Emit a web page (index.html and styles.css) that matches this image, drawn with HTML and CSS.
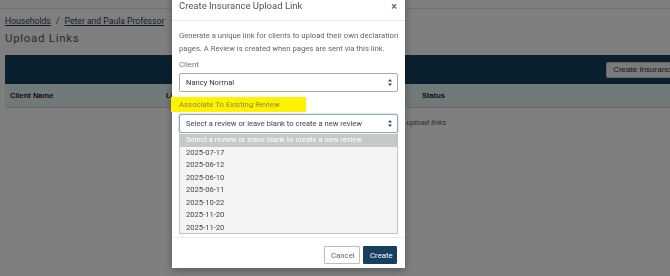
FILE: index.html
```html
<!DOCTYPE html>
<html lang="en">
<head>
    <meta charset="UTF-8">
    <meta name="viewport" content="width=device-width, initial-scale=1.0">
    <title>Upload Links</title>
    <link rel="stylesheet" href="styles.css">
</head>
<body>
    <div class="page">
        <div class="topbar"></div>
        <div class="breadcrumb">
            <a href="#">Households</a>
            <span class="sep">/</span>
            <a href="#">Peter and Paula Professor</a>
        </div>
        <h1 class="page-title">Upload Links</h1>

        <div class="toolbar">
            <button class="btn-light">Create Insurance Upload Link</button>
        </div>

        <div class="table">
            <div class="table-head">
                <div class="cell">Client Name</div>
                <div class="cell">Link</div>
                <div class="cell">Status</div>
            </div>
            <div class="table-empty">No insurance upload links</div>
        </div>
    </div>

    <div class="backdrop"></div>

    <div class="modal">
        <div class="modal-header">
            <span class="modal-title">Create Insurance Upload Link</span>
            <span class="close">&times;</span>
        </div>
        <div class="modal-body">
            <p class="intro">Generate a unique link for clients to upload their own declaration pages. A Review is created when pages are sent via this link.</p>

            <label class="field-label">Client</label>
            <div class="select">
                <span>Nancy Normal</span>
                <svg class="arrows" width="4" height="7" viewBox="0 0 4 7"><path d="M2 0 L4 2.6 H0 Z M2 7 L0 4.4 H4 Z" fill="#444"/></svg>
            </div>

            <div class="highlight">Associate To Existing Review</div>
            <div class="select focused">
                <span>Select a review or leave blank to create a new review</span>
                <svg class="arrows" width="4" height="7" viewBox="0 0 4 7"><path d="M2 0 L4 2.6 H0 Z M2 7 L0 4.4 H4 Z" fill="#444"/></svg>
            </div>
            <div class="options">
                <div class="option active">Select a review or leave blank to create a new review</div>
                <div class="option">2025-07-17</div>
                <div class="option">2025-06-12</div>
                <div class="option">2025-06-10</div>
                <div class="option">2025-06-11</div>
                <div class="option">2025-10-22</div>
                <div class="option">2025-11-20</div>
                <div class="option">2025-11-20</div>
            </div>
        </div>
        <div class="modal-footer">
            <button class="btn-cancel">Cancel</button>
            <button class="btn-primary">Create</button>
        </div>
    </div>
</body>
</html>
```

FILE: styles.css
```css
body {
    margin: 0;
    width: 670px;
    height: 276px;
    overflow: hidden;
    background: #fff;
    font-family: Roboto, "Liberation Sans", sans-serif;
    color: #333;
}
.page {
    width: 727px;
    padding: 0 5px;
}
.topbar {
    height: 8px;
    border-bottom: 1px solid #e4e4e4;
    margin: 0 -5px;
}
.breadcrumb {
    margin-top: 6px;
    font-size: 8.6px;
    line-height: 12px;
    color: #555;
}
.breadcrumb a {
    color: #1d3b52;
    text-decoration: underline;
}
.breadcrumb .sep {
    margin: 0 3px;
}
.page-title {
    margin: 4px 0 0;
    font-size: 11.5px;
    font-weight: 400;
    letter-spacing: 0.7px;
    line-height: 15px;
    color: #555;
}
.toolbar {
    margin-top: 9px;
    height: 29px;
    background: #17405e;
    display: flex;
    align-items: center;
    justify-content: flex-end;
    padding-right: 6px;
}
.btn-light {
    font-family: "Liberation Sans", Arial, sans-serif;
    font-size: 8px;
    height: 16px;
    padding: 0 6px;
    background: #f4f4f4;
    border: 1px solid #ccc;
    border-radius: 2px;
    color: #333;
}
.table {
    font-family: "Liberation Sans", Arial, sans-serif;
    font-size: 7.5px;
}
.table-head {
    display: grid;
    grid-template-columns: 156px 256px 1fr;
    height: 23px;
    align-items: center;
    background: #e2f4f2;
    border-bottom: 1px solid #c9d6d5;
    font-weight: bold;
    color: #222;
}
.table-head .cell {
    padding-left: 5px;
}
.table-empty {
    padding: 10px 0 0 355px;
    font-style: italic;
    color: #555;
}
.backdrop {
    position: fixed;
    inset: 0;
    background: rgba(0, 0, 0, 0.5);
}
.modal {
    position: absolute;
    left: 172px;
    top: -8px;
    width: 233px;
    background: #fff;
    box-shadow: 0 2px 8px rgba(0, 0, 0, 0.3);
}
.modal-header {
    height: 28px;
    display: flex;
    align-items: center;
    justify-content: space-between;
    padding: 0 8px 0 7px;
    border-bottom: 1px solid #e6e6e6;
}
.modal-title {
    font-size: 9.5px;
    color: #555;
    margin-top: -1px;
}
.close {
    font-size: 11px;
    font-weight: bold;
    color: #666;
}
.modal-body {
    padding: 8px 7px 3px;
}
.intro {
    margin: 0 -8px 0 0;
    font-size: 7.7px;
    line-height: 13px;
    color: #666;
}
.field-label {
    display: block;
    margin-top: 3px;
    font-size: 7.8px;
    line-height: 13px;
    color: #777;
}
.select {
    margin-top: 2px;
    height: 19px;
    box-sizing: border-box;
    border: 1px solid #a9a9a9;
    border-radius: 2px;
    display: flex;
    align-items: center;
    justify-content: space-between;
    padding: 0 5px 0 6px;
    font-size: 7.6px;
    color: #333;
}
.select.focused {
    border-color: #8da9bf;
    box-shadow: 0 0 0 1px rgba(140, 200, 230, 0.35);
    color: #444;
}
.highlight {
    margin: 5px 0 2px -8px;
    width: 135px;
    height: 15px;
    line-height: 15px;
    padding-left: 8px;
    box-sizing: border-box;
    background: #fff200;
    font-size: 7.8px;
    color: #8a8a30;
}
.options {
    height: 101px;
    box-sizing: border-box;
    border: 1px solid #c4c4c4;
    border-top: none;
    background: #f3f4f6;
    padding-top: 1px;
    overflow: hidden;
}
.option {
    height: 12.55px;
    line-height: 12.55px;
    padding-left: 6px;
    font-size: 7.6px;
    color: #444;
}
.option.active {
    background: #c8c8c8;
    color: #fff;
}
.modal-footer {
    height: 31px;
    border-top: 1px solid #eee;
    display: flex;
    justify-content: flex-end;
    align-items: flex-start;
    gap: 3px;
    padding: 8px 8px 0 0;
    box-sizing: border-box;
}
.modal-footer button {
    height: 18px;
    font-family: Roboto, sans-serif;
    font-size: 7.8px;
    border-radius: 1px;
}
.btn-cancel {
    width: 36px;
    background: #fff;
    border: 1px solid #b7c2cc;
    color: #666;
}
.btn-primary {
    width: 34px;
    background: #17405e;
    border: 1px solid #17405e;
    color: #fff;
}
```
